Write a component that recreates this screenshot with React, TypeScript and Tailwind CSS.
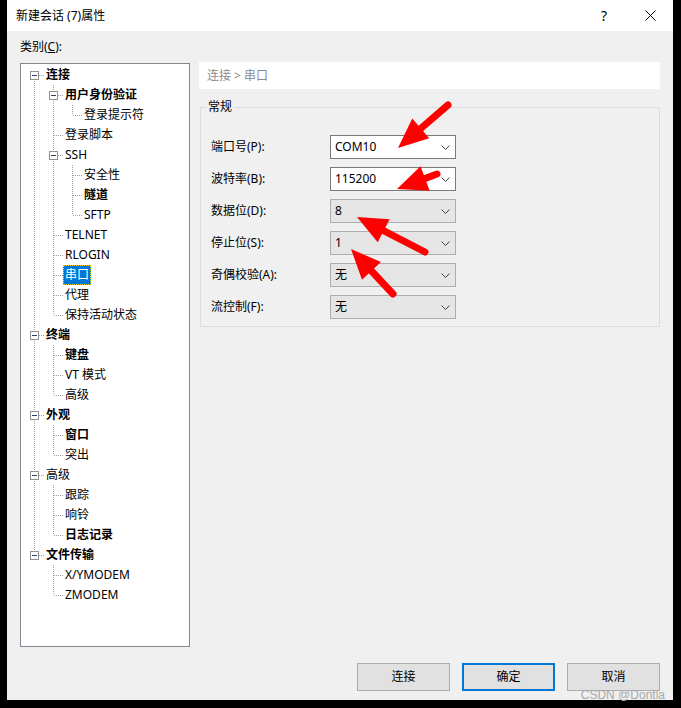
import type { ReactNode } from 'react';

type TreeNode = {
  label: string;
  bold?: boolean;
  selected?: boolean;
  children?: TreeNode[];
};

type FlatRow = {
  node: TreeNode;
  guides: boolean[];
  isLast: boolean;
  isFirstRoot: boolean;
};

const TREE: TreeNode[] = [
  {
    label: '连接',
    bold: true,
    children: [
      { label: '用户身份验证', bold: true, children: [{ label: '登录提示符' }] },
      { label: '登录脚本' },
      {
        label: 'SSH',
        children: [{ label: '安全性' }, { label: '隧道', bold: true }, { label: 'SFTP' }],
      },
      { label: 'TELNET' },
      { label: 'RLOGIN' },
      { label: '串口', selected: true },
      { label: '代理' },
      { label: '保持活动状态' },
    ],
  },
  {
    label: '终端',
    bold: true,
    children: [{ label: '键盘', bold: true }, { label: 'VT 模式' }, { label: '高级' }],
  },
  {
    label: '外观',
    bold: true,
    children: [{ label: '窗口', bold: true }, { label: '突出' }],
  },
  {
    label: '高级',
    children: [{ label: '跟踪' }, { label: '响铃' }, { label: '日志记录', bold: true }],
  },
  {
    label: '文件传输',
    bold: true,
    children: [{ label: 'X/YMODEM' }, { label: 'ZMODEM' }],
  },
];

const FIELDS = [
  { label: '端口号(P):', value: 'COM10', editable: true },
  { label: '波特率(B):', value: '115200', editable: true },
  { label: '数据位(D):', value: '8' },
  { label: '停止位(S):', value: '1' },
  { label: '奇偶校验(A):', value: '无' },
  { label: '流控制(F):', value: '无' },
];

const ARROWS = [
  { x1: 448, y1: 105, x2: 398, y2: 148 },
  { x1: 437, y1: 174, x2: 397, y2: 189 },
  { x1: 425, y1: 252, x2: 357, y2: 217 },
  { x1: 393, y1: 294, x2: 351, y2: 249 },
];

const LINE = '#a0a0a0';

function flatten(nodes: TreeNode[], depth: number, guides: boolean[], out: FlatRow[]) {
  nodes.forEach((node, i) => {
    const isLast = i === nodes.length - 1;
    out.push({ node, guides, isLast, isFirstRoot: depth === 0 && i === 0 });
    if (node.children) flatten(node.children, depth + 1, [...guides, !isLast], out);
  });
  return out;
}

function GuideCell({ on }: { on: boolean }) {
  return (
    <svg width="19" height="20" className="block shrink-0">
      {on && <line x1="9.5" y1="0" x2="9.5" y2="20" stroke={LINE} strokeDasharray="1 1" />}
    </svg>
  );
}

function NodeCell({ row }: { row: FlatRow }) {
  const hasChildren = !!row.node.children;
  return (
    <svg width="19" height="20" className="block shrink-0">
      {!row.isFirstRoot && <line x1="9.5" y1="0" x2="9.5" y2="10" stroke={LINE} strokeDasharray="1 1" />}
      {!row.isLast && <line x1="9.5" y1="10" x2="9.5" y2="20" stroke={LINE} strokeDasharray="1 1" />}
      <line x1={hasChildren ? 14 : 10} y1="10.5" x2="19" y2="10.5" stroke={LINE} strokeDasharray="1 1" />
      {hasChildren && (
        <>
          <rect x="5.5" y="6.5" width="8" height="8" fill="#fff" stroke="#919191" />
          <line x1="7" y1="10.5" x2="12" y2="10.5" stroke="#2c3e6e" />
        </>
      )}
    </svg>
  );
}

function CategoryTree() {
  const rows = flatten(TREE, 0, [], []);
  return (
    <div className="h-[584px] w-[170px] shrink-0 border border-[#828790] bg-white pl-[4px] pt-[1px]">
      {rows.map((row, i) => (
        <div key={i} className="flex h-5 items-center">
          {row.guides.map((g, j) => (
            <GuideCell key={j} on={g} />
          ))}
          <NodeCell row={row} />
          <span
            className={
              'flex h-[20px] items-center whitespace-nowrap px-[2px] leading-none ' +
              (row.node.bold ? 'font-bold ' : '') +
              (row.node.selected
                ? 'bg-[#0078d7] text-white outline-1 -outline-offset-1 outline-dotted outline-[#ffd200]'
                : 'text-black')
            }
          >
            {row.node.label}
          </span>
        </div>
      ))}
    </div>
  );
}

function Chevron() {
  return (
    <svg width="9" height="5" viewBox="0 0 9 5" className="block">
      <path d="M0.5 0.5 L4.5 4.5 L8.5 0.5" fill="none" stroke="#404040" strokeWidth="1" />
    </svg>
  );
}

function ComboBox({ value, editable }: { value: string; editable?: boolean }) {
  return (
    <div
      className={
        'flex h-[24px] w-[126px] items-center justify-between border pl-[4px] pr-[5px] ' +
        (editable ? 'border-[#7a7a7a] bg-white' : 'border-[#adadad] bg-[#e5e5e5]')
      }
    >
      <span className="text-black">{value}</span>
      <Chevron />
    </div>
  );
}

function DialogButton({ children, primary }: { children: ReactNode; primary?: boolean }) {
  return (
    <button
      type="button"
      className={
        'flex h-[28px] w-[93px] items-center justify-center bg-[#e1e1e1] text-black ' +
        (primary ? 'border-2 border-[#0078d7]' : 'border border-[#adadad]')
      }
    >
      {children}
    </button>
  );
}

function Arrow({ x1, y1, x2, y2 }: { x1: number; y1: number; x2: number; y2: number }) {
  const head = 30;
  const half = 13;
  const dx = x2 - x1;
  const dy = y2 - y1;
  const len = Math.hypot(dx, dy);
  const ux = dx / len;
  const uy = dy / len;
  const bx = x2 - ux * head;
  const by = y2 - uy * head;
  const nx = -uy;
  const ny = ux;
  const points = `${x2},${y2} ${bx + nx * half},${by + ny * half} ${bx - nx * half},${by - ny * half}`;
  return (
    <g>
      <line x1={x1} y1={y1} x2={bx + ux * 4} y2={by + uy * 4} stroke="#ff0000" strokeWidth="7" strokeLinecap="round" />
      <polygon points={points} fill="#ff0000" />
    </g>
  );
}

export default function App() {
  return (
    <div className="relative h-[708px] w-[681px] overflow-hidden bg-black font-['Noto_Sans','Noto_Sans_CJK_SC',sans-serif] text-[12px] text-black">
      <div className="ml-[7px] flex h-[700px] w-[666px] flex-col bg-[#f0f0f0]">
        {/* title bar */}
        <div className="flex h-[31px] shrink-0 items-center bg-white">
          <span className="pl-[9px]">新建会话 (7)属性</span>
          <div className="ml-auto flex h-full">
            <div className="flex w-[46px] items-center justify-center text-[14px]">?</div>
            <div className="flex w-[46px] items-center justify-center">
              <svg width="11" height="11" viewBox="0 0 11 11">
                <path d="M0.5 0.5 L10.5 10.5 M10.5 0.5 L0.5 10.5" stroke="#000" strokeWidth="1" />
              </svg>
            </div>
          </div>
        </div>

        {/* body */}
        <div className="flex flex-1 flex-col px-[13px] pt-[8px]">
          <div className="mb-[8px] h-[16px] leading-[16px]">
            类别(<span className="underline">C</span>):
          </div>

          <div className="flex gap-[9px]">
            <CategoryTree />

            <div className="flex flex-1 flex-col">
              <div className="-mt-[1px] flex h-[27px] items-center bg-white pl-[8px] text-[#8a8a8a]">
                连接 &gt; 串口
              </div>

              <fieldset className="ml-[1px] mt-[10px] border border-[#dcdcdc]">
                <legend className="ml-[5px] px-[2px] leading-[16px]">常规</legend>
                <div className="flex flex-col gap-[8px] px-[10px] pb-[7px] pt-[20px]">
                  {FIELDS.map((f) => (
                    <div key={f.label} className="flex items-center">
                      <span className="w-[119px]">{f.label}</span>
                      <ComboBox value={f.value} editable={f.editable} />
                    </div>
                  ))}
                </div>
              </fieldset>
            </div>
          </div>

          <div className="mt-[16px] flex justify-end gap-[12px]">
            <DialogButton>连接</DialogButton>
            <DialogButton primary>确定</DialogButton>
            <DialogButton>取消</DialogButton>
          </div>
        </div>
      </div>

      {/* annotation arrows */}
      <svg className="pointer-events-none absolute inset-0" width="681" height="708">
        {ARROWS.map((a, i) => (
          <Arrow key={i} {...a} />
        ))}
      </svg>

      {/* watermark */}
      <div className="pointer-events-none absolute bottom-[7px] right-[16px] font-['Liberation_Sans',sans-serif] text-[12px] leading-none text-[#a8a8a8]">
        CSDN @Dontla
      </div>
    </div>
  );
}
